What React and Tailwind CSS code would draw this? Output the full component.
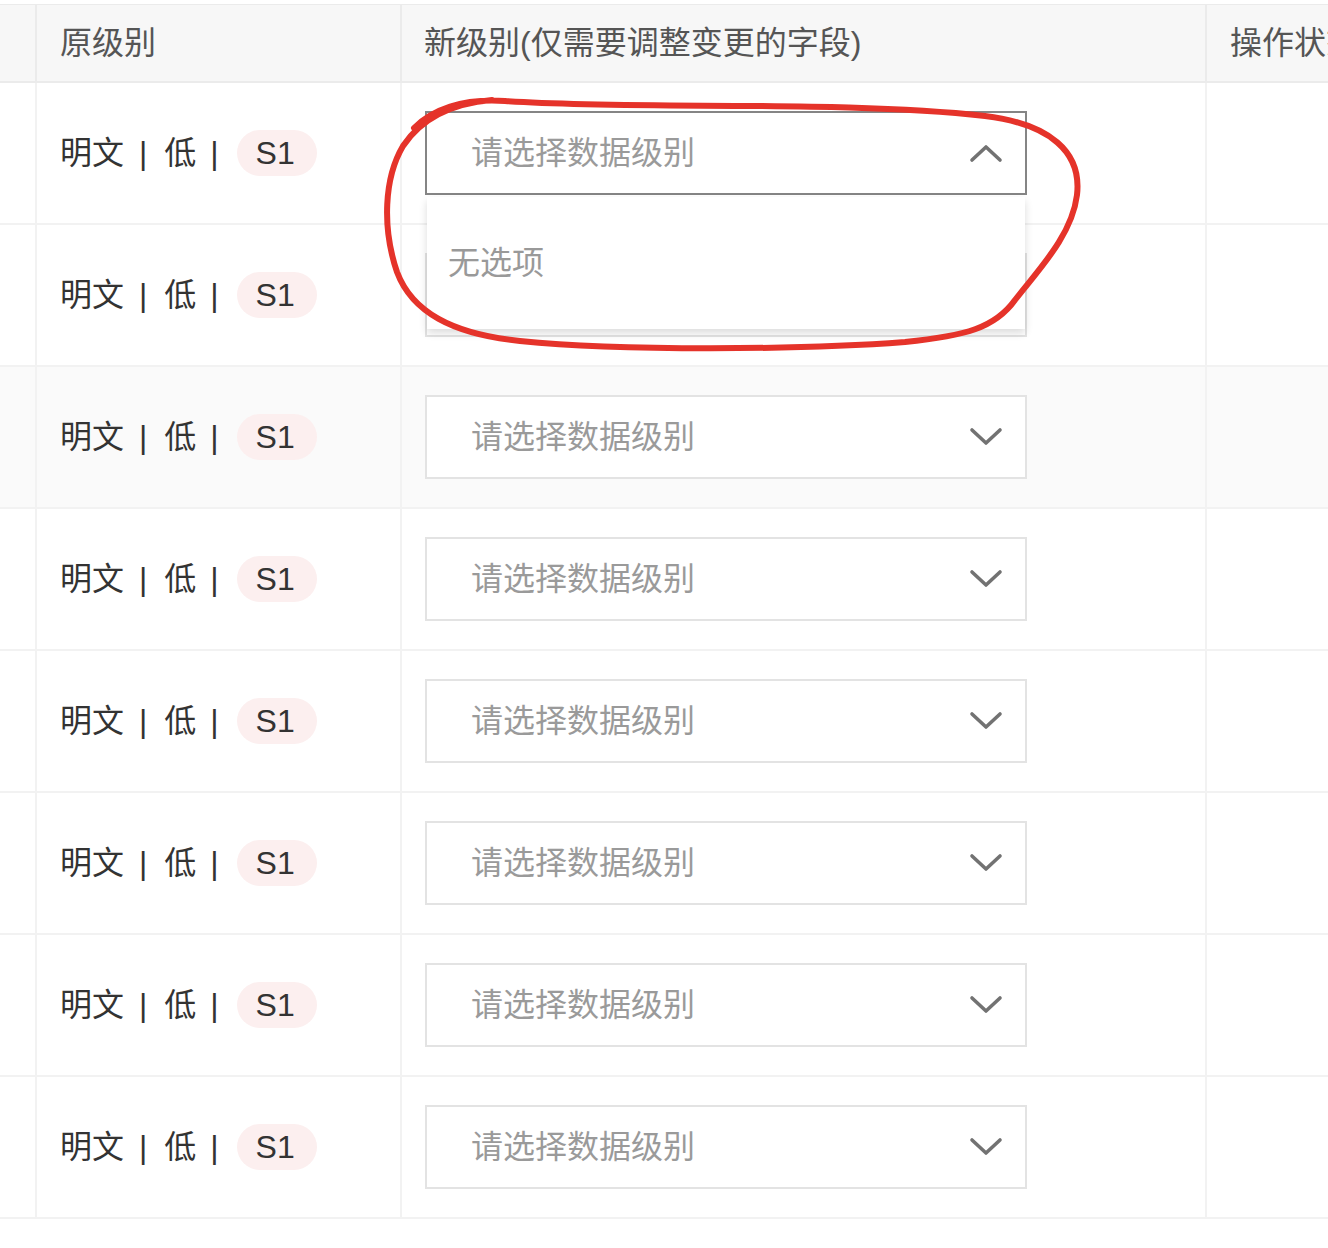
import React from "react";

const FONT = { fontFamily: '"Liberation Sans", "Noto Sans CJK SC", sans-serif' };

function Chevron({ up }) {
  return (
    <svg width="34" height="20" viewBox="0 0 34 20" className="shrink-0">
      <polyline
        points={up ? "3,17 17,4 31,17" : "3,3 17,16 31,3"}
        fill="none"
        stroke="#727272"
        strokeWidth="3.6"
        strokeLinecap="round"
        strokeLinejoin="round"
      />
    </svg>
  );
}

function Level() {
  return (
    <div className="flex items-center text-[32px] text-[#333] leading-none">
      <span>明文</span>
      <span className="ml-[15px]">|</span>
      <span className="ml-[17px]">低</span>
      <span className="ml-[14px]">|</span>
      <span className="ml-[18px] w-[80px] h-[46px] rounded-full bg-[#fcefef] flex items-center justify-center pr-[3px]">
        S1
      </span>
    </div>
  );
}

function Select({ open }) {
  return (
    <div
      className={
        "w-[602px] h-[84px] bg-white flex items-center justify-between pl-[44px] pr-[22px] border-2 " +
        (open ? "border-[#858585]" : "border-[#e3e3e3]")
      }
    >
      <span className="text-[32px] text-[#9a9a9a] leading-none">请选择数据级别</span>
      <Chevron up={open} />
    </div>
  );
}

function Row({ idx }) {
  const hover = idx === 2;
  return (
    <div
      className={
        "flex h-[142px] border-b-2 border-[#f2f2f2] " + (hover ? "bg-[#fafafa]" : "bg-white")
      }
    >
      <div className="w-[37px] shrink-0 border-r-2 border-[#f2f2f2]" />
      <div className="w-[365px] shrink-0 border-r-2 border-[#f2f2f2] pl-[23px] flex items-center">
        <Level />
      </div>
      <div className="w-[805px] shrink-0 border-r-2 border-[#f2f2f2] pl-[23px] flex items-center relative">
        <Select open={idx === 0} />
        {idx === 0 && (
          <div className="absolute left-[25px] top-[114px] w-[598px] h-[132px] bg-white z-10 flex items-center pl-[21px] shadow-[0_4px_8px_rgba(0,0,0,0.14)]">
            <span className="text-[32px] text-[#999] leading-none">无选项</span>
          </div>
        )}
      </div>
      <div className="flex-1" />
    </div>
  );
}

export default function App() {
  return (
    <div className="w-[1328px] h-[1248px] bg-white overflow-hidden relative" style={FONT}>
      <div className="h-[4px]" />
      <div className="flex h-[79px] bg-[#f7f7f7] border-t border-b-2 border-[#ebebeb] text-[32px] text-[#555] leading-none whitespace-nowrap">
        <div className="w-[37px] shrink-0 border-r-2 border-[#ebebeb]" />
        <div className="w-[365px] shrink-0 border-r-2 border-[#ebebeb] pl-[23px] flex items-center">
          原级别
        </div>
        <div className="w-[805px] shrink-0 border-r-2 border-[#ebebeb] pl-[22px] flex items-center">
          新级别(仅需要调整变更的字段)
        </div>
        <div className="flex-1 pl-[23px] flex items-center overflow-hidden">操作状态</div>
      </div>
      {[0, 1, 2, 3, 4, 5, 6, 7].map((i) => (
        <Row key={i} idx={i} />
      ))}
      <svg
        className="absolute left-0 top-0 pointer-events-none z-20"
        width="1328"
        height="1248"
        viewBox="0 0 1328 1248"
      >
        <path
          d="M 414 128 C 432 110, 462 98, 505 101 C 640 110, 840 100, 985 116 C 1050 124, 1082 152, 1077 195 C 1072 235, 1040 268, 1015 300 C 995 328, 965 336, 905 342 C 800 350, 620 351, 520 341 C 452 334, 412 312, 397 272 C 382 228, 384 178, 403 146 C 423 116, 456 103, 492 100"
          fill="none"
          stroke="#e5332a"
          strokeWidth="6"
          strokeLinecap="round"
          strokeLinejoin="round"
        />
      </svg>
    </div>
  );
}
